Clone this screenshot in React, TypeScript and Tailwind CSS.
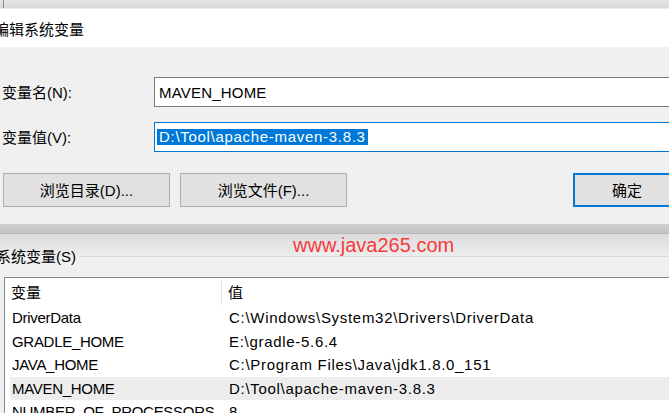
import React from "react";

const rows = [
  { name: "DriverData", value: "C:\\Windows\\System32\\Drivers\\DriverData", sel: false },
  { name: "GRADLE_HOME", value: "E:\\gradle-5.6.4", sel: false },
  { name: "JAVA_HOME", value: "C:\\Program Files\\Java\\jdk1.8.0_151", sel: false },
  { name: "MAVEN_HOME", value: "D:\\Tool\\apache-maven-3.8.3", sel: true },
  { name: "NUMBER_OF_PROCESSORS", value: "8", sel: false },
];

export default function App() {
  return (
    <div className="w-[669px] h-[413px] overflow-hidden relative bg-[#f0f0f0] text-black text-[15px] leading-none font-['Liberation_Sans','Noto_Sans_CJK_SC',sans-serif] flex flex-col">
      {/* background window strip at top */}
      <div className="h-[9px] shrink-0 overflow-hidden bg-gradient-to-b from-[#e6e6e6] to-[#d9d9d9] border-b border-[#ebebeb] flex">
        <div className="ml-[3px] w-px bg-[#8a8a8a] shrink-0" />
        <div className="flex -mt-[14px] h-[17px] leading-[17px] tracking-[0.5px] shrink-0">
          <span className="ml-[11px] w-[216px]">OneDrive</span>
          <span>C:\Users\12041\OneDrive</span>
        </div>
      </div>

      {/* title bar */}
      <div className="h-[38px] shrink-0 bg-white flex items-center">
        <span className="-ml-[6px] pt-[2px]">编辑系统变量</span>
      </div>

      {/* dialog body */}
      <div className="h-[177px] shrink-0 pt-[30px] overflow-hidden">
        <div className="flex items-center h-[30px]">
          <div className="w-[154px] shrink-0 pl-[2px]">变量名(N):</div>
          <div className="w-[530px] shrink-0 h-[30px] border border-[#7a7a7a] bg-white flex items-center pl-[4px] tracking-[0.2px]">
            MAVEN_HOME
          </div>
        </div>
        <div className="flex items-center h-[30px] mt-[15px]">
          <div className="w-[154px] shrink-0 pl-[2px]">变量值(V):</div>
          <div className="w-[530px] shrink-0 h-[30px] border border-[#0078d7] bg-white flex items-center pl-[2px]">
            <span className="bg-[#0078d7] text-white px-[2px] h-[16px] leading-[16px] tracking-[0.7px]">
              D:\Tool\apache-maven-3.8.3
            </span>
          </div>
        </div>
        <div className="flex mt-[21px]">
          <div className="ml-[3px] w-[167px] h-[34px] shrink-0 border border-[#adadad] bg-[#e1e1e1] flex items-center justify-center">
            浏览目录(D)...
          </div>
          <div className="ml-[10px] w-[167px] h-[34px] shrink-0 border border-[#adadad] bg-[#e1e1e1] flex items-center justify-center">
            浏览文件(F)...
          </div>
          <div className="ml-[226px] w-[108px] h-[34px] shrink-0 border-2 border-[#0078d7] bg-[#e1e1e1] flex items-center justify-center">
            确定
          </div>
        </div>
      </div>

      {/* dialog shadow */}
      <div className="h-[10px] shrink-0 bg-gradient-to-b from-[#cfcfcf] to-[#c3c3c3] border-b border-[#b8b8b8]" />

      {/* background window */}
      <div className="h-[43px] shrink-0 bg-[linear-gradient(to_bottom,#dcdcdc,#ececec_21px,#f0f0f0_23px)]">
        <div className="mt-[13px] h-[18px] flex items-center">
          <span className="-ml-[4px] shrink-0">系统变量(S)</span>
          <div className="flex-1 h-px bg-[#d9d9d9] ml-[3px]" />
        </div>
      </div>

      <div className="flex-1 ml-[4px] border-l border-t border-[#828790] bg-white">
        <div className="flex h-[28px]">
          <div className="w-[217px] shrink-0 pl-[6px] border-r border-[#e5e5e5] flex items-center my-[1px]">变量</div>
          <div className="pl-[6px] flex items-center">值</div>
        </div>
        {rows.map((r) => (
          <div
            key={r.name}
            className={`ml-[5px] flex h-[23.5px] items-center ${r.sel ? "bg-[#ededed]" : ""}`}
          >
            <div className="w-[212px] shrink-0 pl-[2px] whitespace-nowrap overflow-hidden leading-[19px] tracking-[-0.3px]">{r.name}</div>
            <div className="pl-[7px] whitespace-nowrap leading-[19px] tracking-[0.7px]">{r.value}</div>
          </div>
        ))}
      </div>

      {/* watermark */}
      <div className="absolute left-[293px] top-[233px] text-[20px] leading-[24px] text-[#f43c3c] font-['Liberation_Sans',sans-serif]">
        www.java265.com
      </div>
    </div>
  );
}
